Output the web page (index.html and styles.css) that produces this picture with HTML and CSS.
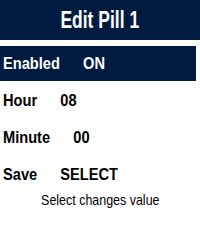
FILE: index.html
```html
<!DOCTYPE html>
<html lang="en">
<head>
  <meta charset="UTF-8" />
  <meta name="viewport" content="width=device-width, initial-scale=1.0" />
  <title>Edit Pill 1</title>
  <link rel="stylesheet" href="styles.css">
</head>
<body>

  <header class="title-bar"><span class="narrow">Edit Pill 1</span></header>

  <ul class="menu">
    <li class="row selected"><div class="row-text"><span>Enabled</span><span>ON</span></div></li>
    <li class="row"><div class="row-text"><span>Hour</span><span>08</span></div></li>
    <li class="row"><div class="row-text"><span>Minute</span><span>00</span></div></li>
    <li class="row"><div class="row-text"><span>Save</span><span>SELECT</span></div></li>
  </ul>

  <p class="hint"><span class="narrow">Select changes value</span></p>

</body>
</html>
```

FILE: styles.css
```css
body {
  margin: 0;
  padding: 0;
  background-color: #fff;
  color: #000;
  font-family: 'Liberation Sans', Arial, sans-serif;
}
/* no narrow font installed, so squeeze the glyphs */
.narrow {
  display: inline-block;
}
.title-bar {
  height: 40px;
  line-height: 40px;
  background-color: #001b40;
  color: #fff;
  text-align: center;
  font-weight: bold;
  font-size: 23px;
}
.title-bar .narrow {
  transform: scaleX(0.76);
}
.menu {
  list-style: none;
  margin: 6px 4px 0 0;
  padding: 0;
}
.row {
  display: flex;
  align-items: center;
  height: 35px;
  margin-bottom: 2px;
  padding-left: 3px;
  font-weight: bold;
  font-size: 17px;
}
.row-text {
  display: flex;
  gap: 27px;
  transform: scaleX(0.86);
  transform-origin: left center;
}
.row.selected {
  background-color: #001b40;
  color: #fff;
}
.hint {
  margin: -2px 0 0;
  text-align: center;
  font-size: 15px;
  line-height: 16px;
}
.hint .narrow {
  transform: scaleX(0.83);
}
```
